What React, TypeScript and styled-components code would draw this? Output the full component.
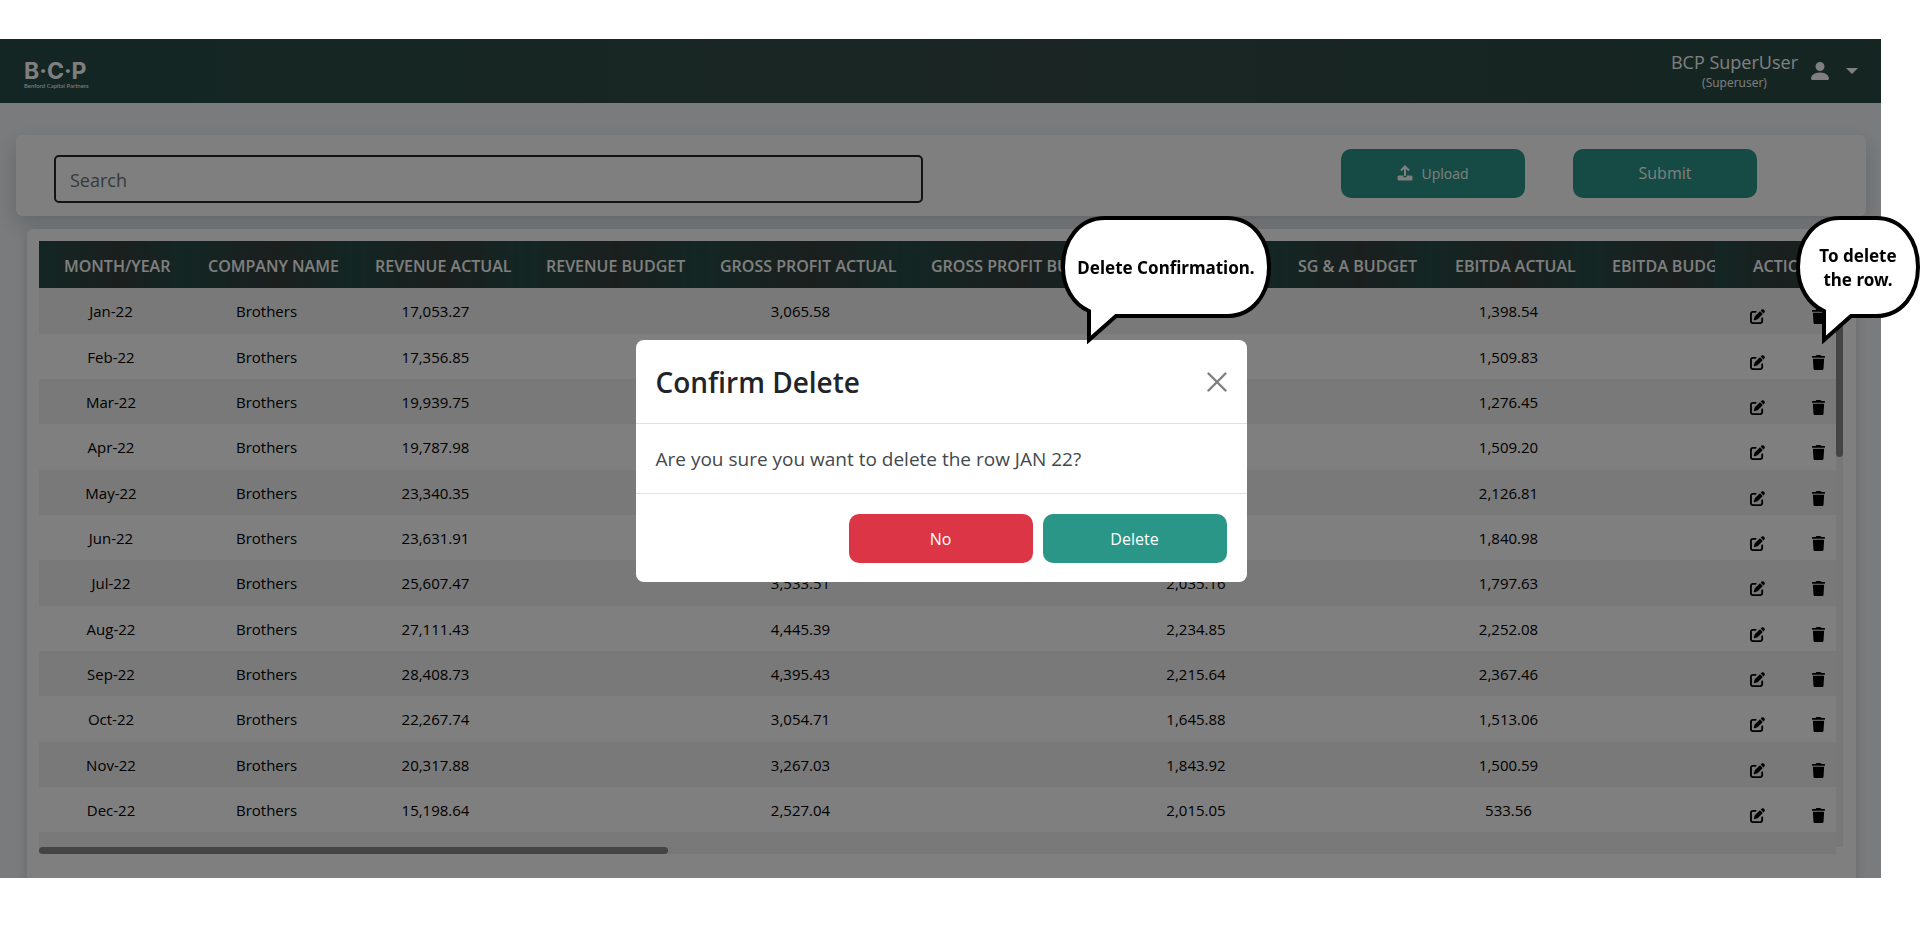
import React from "react";
import styled, { createGlobalStyle, css } from "styled-components";
import { FaTrash, FaPenToSquare } from "react-icons/fa6";
import { BsPersonFill } from "react-icons/bs";

const GlobalStyle = createGlobalStyle`
  * { box-sizing: border-box; }
  body { margin: 0; background: #fff; font-family: "Open Sans", "Noto Sans", sans-serif; color: #212529; }
  button, input { font-family: inherit; }
`;

const Stage = styled.main`
  position: relative;
  padding: 39px 39px 57px 0;
`;

const Screen = styled.div`
  position: relative;
  height: 839px;
  overflow: hidden;
  background: #f5f7fa;
`;

const TopBar = styled.header`
  display: flex;
  align-items: center;
  justify-content: space-between;
  height: 64px;
  padding: 0 23px 0 24px;
  color: #fff;
  background: linear-gradient(90deg, #264c46 0%, #364c48 50%, #284a44 100%);
`;

const Logo = styled.a`
  display: flex;
  flex-direction: column;
  padding-top: 10px;
  color: #fff;
  text-decoration: none;
`;

const LogoName = styled.span`
  font: 700 23px/20px Inter, sans-serif;
`;

const LogoTag = styled.span`
  font: 400 6px/10px Lato, sans-serif;
`;

const Account = styled.button`
  display: flex;
  align-items: center;
  padding: 0;
  border: 0;
  color: #fff;
  background: none;
`;

const AccountName = styled.span`
  display: flex;
  flex-direction: column;
  align-items: center;
  margin-right: 10px;
  font-size: 18px;
  line-height: 24px;
`;

const AccountRole = styled.small`
  font-size: 12px;
  line-height: 18px;
`;

const Caret = styled.span`
  margin-left: 14px;
  border: 6px solid transparent;
  border-top-color: #fff;
  border-bottom-width: 0;
`;

const Toolbar = styled.section`
  display: flex;
  align-items: center;
  height: 81px;
  margin: 32px 15px 13px 16px;
  padding: 0 109px 0 38px;
  border-radius: 6px;
  background: #fff;
  box-shadow: 0 8px 20px rgba(40, 50, 60, 0.22);
`;

const SearchInput = styled.input`
  width: 869px;
  height: 48px;
  margin-right: auto;
  margin-top: 6px;
  padding: 2px 14px 0;
  border: 2px solid #212529;
  border-radius: 5px;
  font-size: 18px;
  color: #212529;
  background: #fff;
  &::placeholder { color: #6c757d; opacity: 1; }
`;

const Button = styled.button<{ $tone?: "danger"; $small?: boolean }>`
  display: inline-flex;
  align-items: center;
  justify-content: center;
  gap: 8px;
  width: 184px;
  height: 49px;
  border: 0;
  border-radius: 10px;
  color: #fff;
  background: ${(p) => (p.$tone === "danger" ? "#dc3545" : "#2a9688")};
  font-size: ${(p) => (p.$small ? 14 : 16)}px;
`;

const ToolbarActions = styled.div`
  display: flex;
  gap: 48px;
  margin-bottom: 5px;
`;

const TableCard = styled.section`
  margin: 0 25px 0 27px;
  padding: 12px 13px 60px 12px;
  border-radius: 6px;
  background: #fff;
  box-shadow: 0 4px 12px rgba(40, 50, 60, 0.2);
`;

const ScrollFrame = styled.div`
  display: grid;
  grid-template-columns: 1fr 7px;
  grid-template-rows: 606px 7px;
`;

const Viewport = styled.div`
  overflow: hidden;
`;

const Track = styled.div`
  background: #f1f1f1;
`;

const Thumb = styled.div<{ $axis: "x" | "y" }>`
  border-radius: 4px;
  background: #888;
  ${(p) => (p.$axis === "x" ? css`width: 35%; height: 100%;` : css`width: 100%; height: 216px;`)}
`;

const Table = styled.table`
  table-layout: fixed;
  width: 1832px;
  border-collapse: separate;
  border-spacing: 0;
`;

const HeadCell = styled.th<{ $pinned?: boolean }>`
  height: 47px;
  padding: 3px 0 0 25px;
  text-align: left;
  white-space: nowrap;
  font-size: 16px;
  font-weight: 600;
  line-height: 20px;
  color: #fff;
  background: linear-gradient(90deg, #264c46, #353f3d 55%, #264c46);
  ${(p) => p.$pinned && css`position: sticky; right: 0; padding-left: 38px;`}
`;

const Row = styled.tr`
  height: 45px;
  --row-bg: #fff;
  &:nth-child(odd) { --row-bg: #f2f2f2; }
  &:nth-child(3n + 1) { height: 46px; }
`;

const Cell = styled.td`
  padding: 0;
  text-align: center;
  font-size: 15px;
  line-height: 20px;
  color: #000;
  background: var(--row-bg);
`;

const PinnedCell = styled(Cell)`
  position: sticky;
  right: 0;
  padding: 11px 10px 0 35px;
`;

const RowActions = styled.div`
  display: flex;
  justify-content: space-between;
`;

const IconButton = styled.button`
  display: flex;
  padding: 0;
  border: 0;
  color: #000;
  background: none;
`;

const Backdrop = styled.div`
  position: absolute;
  inset: 0;
  background: rgba(0, 0, 0, 0.5);
`;

const Dialog = styled.section`
  position: absolute;
  top: 301px;
  left: 50%;
  width: 611px;
  margin-left: -305px;
  border-radius: 8px;
  background: #fff;
`;

const DialogHeader = styled.header`
  display: flex;
  align-items: center;
  justify-content: space-between;
  height: 84px;
  padding: 0 20px;
  border-bottom: 1px solid #dee2e6;
`;

const DialogTitle = styled.h2`
  margin: 0;
  font-size: 28px;
  font-weight: 600;
  line-height: 40px;
`;

const CloseButton = styled(IconButton)`
  color: #7f7f7f;
`;

const DialogText = styled.p`
  margin: 0;
  padding: 21px 20px 19px;
  font-size: 19px;
  line-height: 29px;
  color: #43484d;
`;

const DialogFooter = styled.footer`
  display: flex;
  justify-content: flex-end;
  gap: 10px;
  padding: 20px 20px 19px;
  border-top: 1px solid #dee2e6;
`;

const Bubble = styled.aside<{ $kind: "dialog" | "row" }>`
  position: absolute;
  top: 216px;
  ${(p) => (p.$kind === "dialog" ? css`left: 1061px; width: 210px;` : css`right: 0; width: 124px;`)}
  height: 128px;
  color: #000;
  font: 700 17px/24px "Noto Sans", sans-serif;
  text-align: center;
  svg { position: absolute; inset: 0; }
`;

const BubbleText = styled.p`
  position: relative;
  display: flex;
  align-items: center;
  justify-content: center;
  height: 104px;
  margin: 0;
`;

const columns: [string, number][] = [
  ["MONTH/YEAR", 144],
  ["COMPANY NAME", 167],
  ["REVENUE ACTUAL", 171],
  ["REVENUE BUDGET", 174],
  ["GROSS PROFIT ACTUAL", 211],
  ["GROSS PROFIT BUDGET", 213],
  ["SG & A ACTUAL", 154],
  ["SG & A BUDGET", 157],
  ["EBITDA ACTUAL", 157],
  ["EBITDA BUDGET", 163],
];

const rows = [
  ["Jan-22", "17,053.27", "3,065.58", "", "1,398.54"],
  ["Feb-22", "17,356.85", "", "", "1,509.83"],
  ["Mar-22", "19,939.75", "", "", "1,276.45"],
  ["Apr-22", "19,787.98", "", "", "1,509.20"],
  ["May-22", "23,340.35", "", "", "2,126.81"],
  ["Jun-22", "23,631.91", "", "", "1,840.98"],
  ["Jul-22", "25,607.47", "3,533.51", "2,035.16", "1,797.63"],
  ["Aug-22", "27,111.43", "4,445.39", "2,234.85", "2,252.08"],
  ["Sep-22", "28,408.73", "4,395.43", "2,215.64", "2,367.46"],
  ["Oct-22", "22,267.74", "3,054.71", "1,645.88", "1,513.06"],
  ["Nov-22", "20,317.88", "3,267.03", "1,843.92", "1,500.59"],
  ["Dec-22", "15,198.64", "2,527.04", "2,015.05", "533.56"],
  ["", "", "", "", ""],
];

const UploadIcon = () => (
  <svg width="16" height="16" viewBox="0 0 16 16" fill="none" stroke="currentColor" strokeWidth="2">
    <path d="M8 11V2M4 5.500 8 1.500 12 5.500" />
    <path d="M2 10.500h4q0 2 2 2t2-2h4q1.500 0 1.500 1.500v2q0 1.500-1.500 1.500H2Q.5 15.500.5 14v-2Q.5 10.500 2 10.500z" fill="currentColor" stroke="none" />
  </svg>
);

const CloseIcon = () => (
  <svg width="20" height="20" viewBox="0 0 20 20" fill="none" stroke="currentColor" strokeWidth="2.400" strokeLinecap="round">
    <path d="M1.500 1.500 18.500 18.500M18.500 1.500 1.500 18.500" />
  </svg>
);

export default function App() {
  return (
    <>
      <GlobalStyle />
      <Stage>
        <Screen>
          <TopBar>
            <Logo href="#">
              <LogoName>B·C·P</LogoName>
              <LogoTag>Benford Capital Partners</LogoTag>
            </Logo>
            <Account>
              <AccountName>
                BCP SuperUser
                <AccountRole>(Superuser)</AccountRole>
              </AccountName>
              <BsPersonFill size={24} />
              <Caret />
            </Account>
          </TopBar>
          <Toolbar>
            <SearchInput type="search" placeholder="Search" aria-label="Search" />
            <ToolbarActions>
              <Button $small><UploadIcon />Upload</Button>
              <Button>Submit</Button>
            </ToolbarActions>
          </Toolbar>
          <TableCard>
            <ScrollFrame>
              <Viewport>
                <Table>
                  <colgroup>
                    {columns.map(([name, width]) => <col key={name} width={width} />)}
                    <col width={121} />
                  </colgroup>
                  <thead>
                    <tr>
                      {columns.map(([name]) => <HeadCell key={name}>{name}</HeadCell>)}
                      <HeadCell $pinned>ACTIONS</HeadCell>
                    </tr>
                  </thead>
                  <tbody>
                    {rows.map(([month, revenue, profit, sga, ebitda]) => (
                      <Row key={month}>
                        <Cell>{month}</Cell>
                        <Cell>{month && "Brothers"}</Cell>
                        <Cell>{revenue}</Cell>
                        <Cell />
                        <Cell>{profit}</Cell>
                        <Cell />
                        <Cell>{sga}</Cell>
                        <Cell />
                        <Cell>{ebitda}</Cell>
                        <Cell />
                        <PinnedCell>
                          {month && (
                            <RowActions>
                              <IconButton aria-label={`Edit ${month}`}><FaPenToSquare size={15} /></IconButton>
                              <IconButton aria-label={`Delete ${month}`}><FaTrash size={15} /></IconButton>
                            </RowActions>
                          )}
                        </PinnedCell>
                      </Row>
                    ))}
                  </tbody>
                </Table>
              </Viewport>
              <Track><Thumb $axis="y" /></Track>
              <Track><Thumb $axis="x" /></Track>
            </ScrollFrame>
          </TableCard>
          <Backdrop />
          <Dialog role="dialog" aria-labelledby="confirm-title">
            <DialogHeader>
              <DialogTitle id="confirm-title">Confirm Delete</DialogTitle>
              <CloseButton aria-label="Close"><CloseIcon /></CloseButton>
            </DialogHeader>
            <DialogText>Are you sure you want to delete the row JAN 22?</DialogText>
            <DialogFooter>
              <Button $tone="danger">No</Button>
              <Button>Delete</Button>
            </DialogFooter>
          </Dialog>
        </Screen>
        <Bubble $kind="dialog">
          <svg width="210" height="128" viewBox="0 0 210 128" fill="#fff" stroke="#000" strokeWidth="4">
            <path d="M44 2H166C192 2 208 24 208 51S192 100 166 100H55L28 124V95C12 88 2 71 2 51C2 24 18 2 44 2Z" />
          </svg>
          <BubbleText>Delete Confirmation.</BubbleText>
        </Bubble>
        <Bubble $kind="row">
          <svg width="124" height="128" viewBox="0 0 124 128" fill="#fff" stroke="#000" strokeWidth="4">
            <path d="M44 2H80C106 2 122 24 122 51S106 100 80 100H55L28 124V95C12 88 2 71 2 51C2 24 18 2 44 2Z" />
          </svg>
          <BubbleText>To delete<br />the row.</BubbleText>
        </Bubble>
      </Stage>
    </>
  );
}
